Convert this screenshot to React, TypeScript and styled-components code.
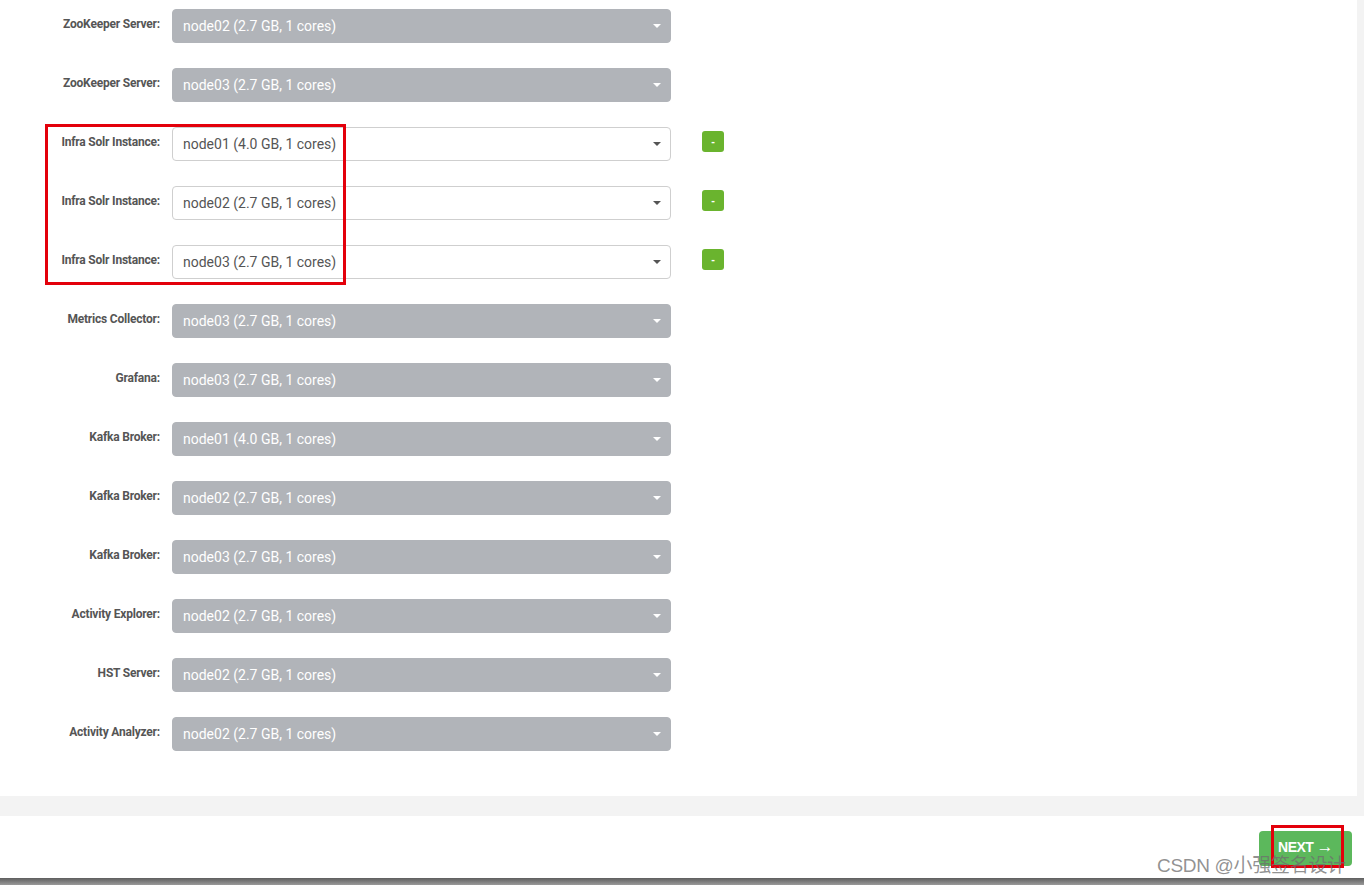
import React from 'react';
import styled, { createGlobalStyle } from 'styled-components';

const GlobalStyle = createGlobalStyle`
  html, body {
    margin: 0;
    padding: 0;
    background: #f3f3f3;
    font-family: Roboto, "Liberation Sans", Arial, sans-serif;
  }
`;

type Assignment = {
  label: string;
  host: string;
  editable?: boolean;
};

const rows: Assignment[] = [
  { label: 'ZooKeeper Server:', host: 'node02 (2.7 GB, 1 cores)' },
  { label: 'ZooKeeper Server:', host: 'node03 (2.7 GB, 1 cores)' },
  { label: 'Infra Solr Instance:', host: 'node01 (4.0 GB, 1 cores)', editable: true },
  { label: 'Infra Solr Instance:', host: 'node02 (2.7 GB, 1 cores)', editable: true },
  { label: 'Infra Solr Instance:', host: 'node03 (2.7 GB, 1 cores)', editable: true },
  { label: 'Metrics Collector:', host: 'node03 (2.7 GB, 1 cores)' },
  { label: 'Grafana:', host: 'node03 (2.7 GB, 1 cores)' },
  { label: 'Kafka Broker:', host: 'node01 (4.0 GB, 1 cores)' },
  { label: 'Kafka Broker:', host: 'node02 (2.7 GB, 1 cores)' },
  { label: 'Kafka Broker:', host: 'node03 (2.7 GB, 1 cores)' },
  { label: 'Activity Explorer:', host: 'node02 (2.7 GB, 1 cores)' },
  { label: 'HST Server:', host: 'node02 (2.7 GB, 1 cores)' },
  { label: 'Activity Analyzer:', host: 'node02 (2.7 GB, 1 cores)' },
];

const Page = styled.div`
  width: 1364px;
  height: 885px;
  display: flex;
  flex-direction: column;
  position: relative;
  overflow: hidden;
`;

const Panel = styled.div`
  height: 796px;
  margin-right: 7px;
  background: #fff;
  box-sizing: border-box;
  padding-top: 9px;
  display: flex;
  flex-direction: column;
  gap: 25px;
`;

const Row = styled.div`
  display: flex;
  align-items: flex-start;
`;

const Label = styled.label`
  width: 160px;
  padding-top: 7px;
  text-align: right;
  font-size: 12px;
  line-height: 16px;
  font-weight: 700;
  letter-spacing: -0.2px;
  color: #555;
  white-space: nowrap;
`;

const Select = styled.div<{ $editable?: boolean }>`
  margin-left: 12px;
  width: 499px;
  height: 34px;
  box-sizing: border-box;
  border-radius: 4px;
  padding: 0 10px;
  display: flex;
  align-items: center;
  justify-content: space-between;
  font-size: 14px;
  background: ${(p) => (p.$editable ? '#fff' : '#b1b4b9')};
  border: 1px solid ${(p) => (p.$editable ? '#cfcfcf' : '#b1b4b9')};
  color: ${(p) => (p.$editable ? '#555' : '#fff')};
`;

const Caret = styled.span<{ $editable?: boolean }>`
  width: 0;
  height: 0;
  margin-right: -1px;
  border-left: 4px solid transparent;
  border-right: 4px solid transparent;
  border-top: 4px solid ${(p) => (p.$editable ? '#555' : '#fff')};
`;

const MinusButton = styled.button`
  margin-left: 31px;
  margin-top: 4px;
  width: 22px;
  height: 21px;
  border: none;
  border-radius: 3px;
  background: #6ab42e;
  color: #fff;
  font-size: 11px;
  font-weight: 700;
  line-height: 21px;
  padding: 0;
`;

const Gutter = styled.div`
  height: 20px;
  background: #f3f3f3;
`;

const Footer = styled.div`
  height: 62px;
  background: #fff;
  display: flex;
  justify-content: flex-end;
  align-items: flex-start;
  padding: 15px 12px 0 0;
  box-sizing: border-box;
`;

const NextButton = styled.button`
  width: 93px;
  height: 35px;
  border: none;
  border-radius: 4px;
  background: #5cb85c;
  color: #fff;
  font-family: "Liberation Sans", Arial, sans-serif;
  font-size: 14px;
  font-weight: 700;
  letter-spacing: -0.5px;
  padding: 0 0 3px 0;
`;

const Arrow = styled.span`
  font-size: 17px;
  font-weight: 400;
  margin-left: 3px;
`;

const BottomBar = styled.div`
  height: 7px;
  background: linear-gradient(#5e5e5e, #9a9a9a);
`;

const Highlight = styled.div<{ $left: number; $top: number; $w: number; $h: number }>`
  position: absolute;
  left: ${(p) => p.$left}px;
  top: ${(p) => p.$top}px;
  width: ${(p) => p.$w}px;
  height: ${(p) => p.$h}px;
  box-sizing: border-box;
  border: 3px solid #e3000b;
  pointer-events: none;
`;

const Watermark = styled.div`
  position: absolute;
  left: 1157px;
  top: 850px;
  font-family: "Liberation Sans", "Noto Sans CJK SC", sans-serif;
  font-size: 19px;
  color: rgba(110, 110, 110, 0.75);
  letter-spacing: -0.3px;
  white-space: nowrap;
`;

export default function App() {
  return (
    <>
      <GlobalStyle />
      <Page>
        <Panel>
          {rows.map((r, i) => (
            <Row key={i}>
              <Label>{r.label}</Label>
              <Select $editable={r.editable}>
                <span>{r.host}</span>
                <Caret $editable={r.editable} />
              </Select>
              {r.editable && <MinusButton>-</MinusButton>}
            </Row>
          ))}
        </Panel>
        <Gutter />
        <Footer>
          <NextButton>
            NEXT<Arrow>→</Arrow>
          </NextButton>
        </Footer>
        <BottomBar />
        <Highlight $left={45} $top={124} $w={301} $h={161} />
        <Highlight $left={1271} $top={825} $w={73} $h={43} />
        <Watermark>CSDN @小强签名设计</Watermark>
      </Page>
    </>
  );
}
